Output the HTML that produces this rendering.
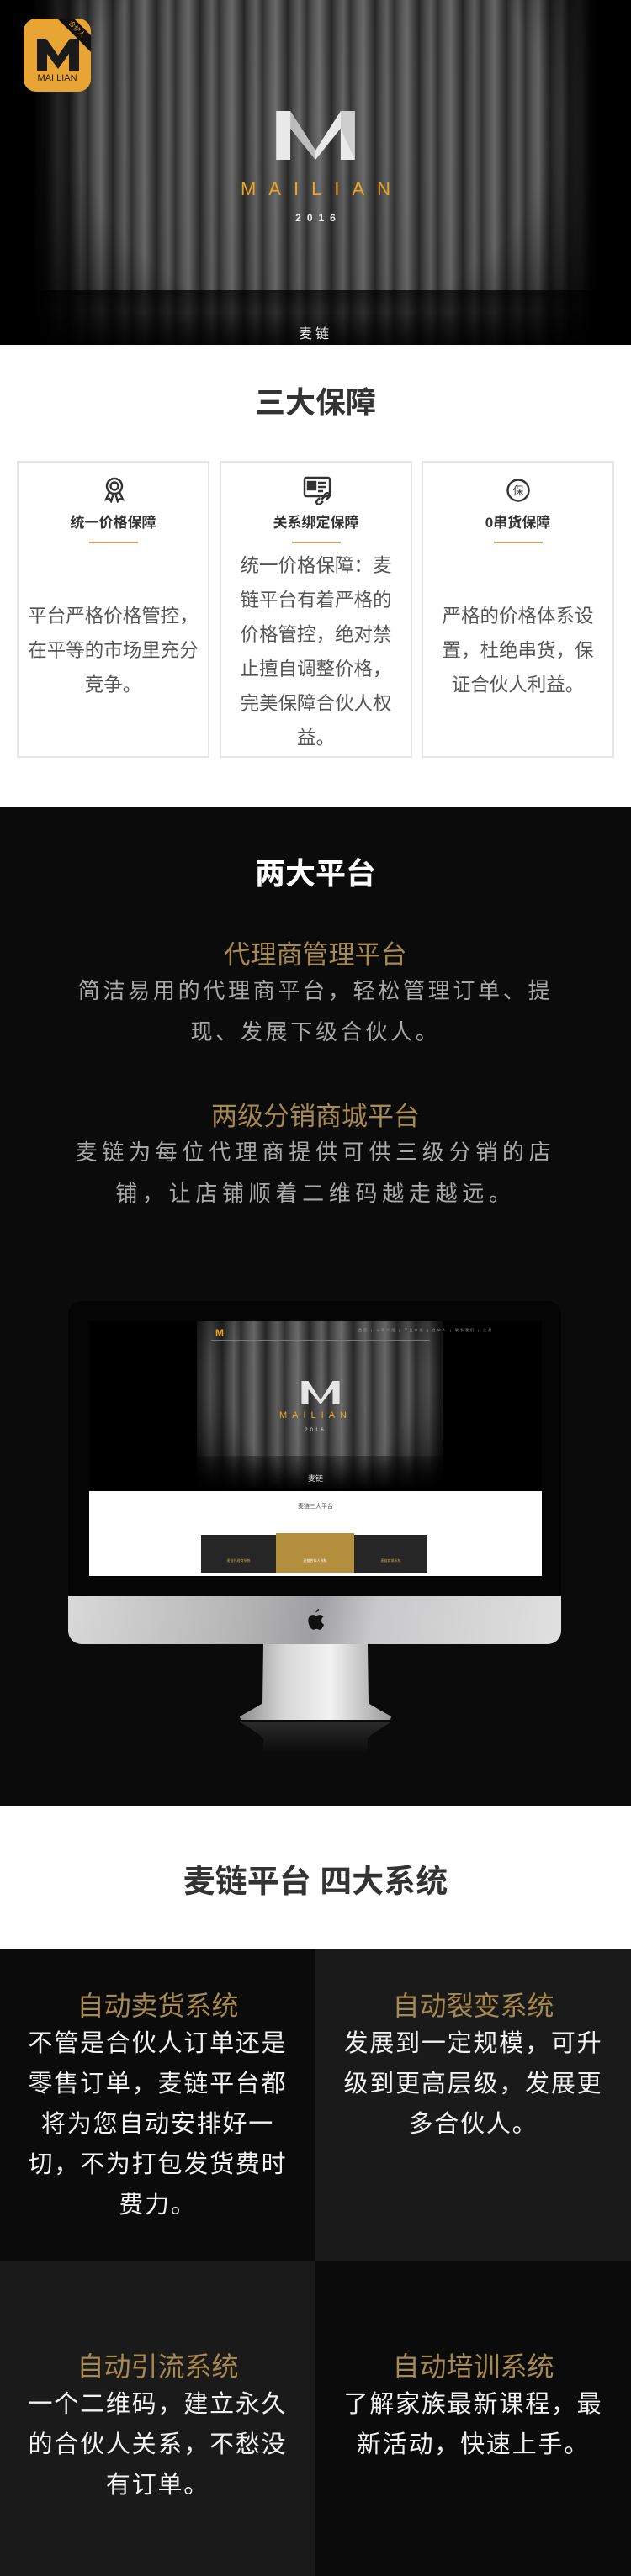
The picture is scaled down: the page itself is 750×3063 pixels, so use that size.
<!DOCTYPE html>
<html><head><meta charset="utf-8">
<style>
*{margin:0;padding:0;box-sizing:border-box}
body{width:750px;height:3063px;position:relative;background:#fff;font-family:"Liberation Sans","Noto Sans CJK SC",sans-serif;overflow:hidden}
.abs{position:absolute}
.c{position:absolute;left:0;width:100%;text-align:center}
.curtain{background:
 radial-gradient(ellipse 62% 95% at 50% 35%,rgba(0,0,0,0) 0%,rgba(0,0,0,.1) 60%,rgba(0,0,0,.9) 100%),
 repeating-linear-gradient(90deg,#333 0px,#5a5a5a 9px,#707070 16px,#454545 24px,#2a2a2a 30px,#505050 38px,#666 44px,#383838 52px);}
.card{position:absolute;top:548px;height:353px;width:229px;border:2px solid #e6e6e6;background:#fff}
.card .t{position:absolute;top:57px;width:100%;text-align:center;font-size:17px;font-weight:bold;color:#333}
.card .ln{position:absolute;top:94px;left:50%;margin-left:-29px;width:58px;height:2px;background:#d6a25a}
.card .b{position:absolute;left:0;width:100%;text-align:center;font-size:22.5px;line-height:41px;color:#555}
.gold{color:#a8894f}
.cell{position:absolute;width:375px;text-align:center}
.cell h3{font-size:32px;font-weight:normal;color:#a8894f;line-height:42px}
.cell p{font-size:29px;line-height:48px;color:#f2f2f2;letter-spacing:1.8px}
</style></head><body>

<!-- HERO -->
<div class="abs curtain" style="left:0;top:0;width:750px;height:410px"></div>
<div class="abs" style="left:0;top:345px;width:750px;height:65px;background:linear-gradient(rgba(0,0,0,.75) 0%,rgba(0,0,0,.55) 40%,rgba(0,0,0,.85) 100%)"></div>
<div class="abs" style="left:0;top:0;width:110px;height:410px;background:linear-gradient(90deg,#000 35%,rgba(0,0,0,0))"></div>
<div class="abs" style="left:640px;top:0;width:110px;height:410px;background:linear-gradient(270deg,#000 35%,rgba(0,0,0,0))"></div>
<!-- small logo -->
<div class="abs" style="left:28px;top:22px;width:80px;height:87px;background:#e8a533;border-radius:15px;overflow:hidden">
 <div class="abs" style="right:-18px;top:6px;width:70px;height:14px;background:#111;transform:rotate(45deg);color:#e8a533;font-size:8px;text-align:center;line-height:14px">合伙人</div>
 <svg class="abs" style="left:16px;top:24px" width="50" height="38" viewBox="0 0 100 76"><polygon points="0,0 22,0 50,40 78,0 100,0 100,76 76,76 76,36 50,72 24,36 24,76 0,76" fill="#1a1a1a"/></svg>
 <div class="abs" style="left:0;top:65px;width:80px;text-align:center;font-size:11px;color:#222">MAI LIAN</div>
</div>
<!-- big M -->
<svg class="abs" style="left:328px;top:132px" width="94" height="58" viewBox="0 0 100 62"><polygon points="0,0 18,0 50,50 82,0 100,0 100,62 82,62 82,22 50,62 18,22 18,62 0,62" fill="#e9e9e9"/><polygon points="18,0 50,50 50,62 18,22" fill="#bdbdbd"/><polygon points="82,0 100,0 100,62 82,22" fill="#cfcfcf"/></svg>
<div class="c" style="top:212px;font-size:22px;color:#f0a420;letter-spacing:15px;padding-left:15px">MAILIAN</div>
<div class="c" style="top:252px;font-size:12px;color:#eee;letter-spacing:7px;padding-left:7px;font-weight:bold">2016</div>
<div class="c" style="top:383px;font-size:16px;color:#eee;letter-spacing:4px">麦链</div>

<!-- 三大保障 -->
<div class="c" style="top:450px;font-size:36px;font-weight:bold;color:#333">三大保障</div>
<div class="card" style="left:20px">
 <svg class="abs" style="left:98px;top:16px" width="32" height="32" viewBox="0 0 32 32" fill="none" stroke="#333" stroke-width="2.4"><circle cx="16" cy="12" r="9"/><circle cx="16" cy="12" r="4.5"/><path d="M10 19 L6 28 L10 27 L12 30 L15 21 M22 19 L26 28 L22 27 L20 30 L17 21"/></svg>
 <div class="t">统一价格保障</div><div class="ln"></div>
 <div class="b" style="top:162px">平台严格价格管控，<br>在平等的市场里充分<br>竞争。</div>
</div>
<div class="card" style="left:261px">
 <svg class="abs" style="left:97px;top:16px" width="34" height="34" viewBox="0 0 34 34" fill="none" stroke="#333" stroke-width="2.4"><rect x="2" y="2" width="30" height="22" rx="2"/><rect x="6" y="7" width="9" height="9" fill="#333"/><path d="M18 8h10M18 13h10M18 18h6"/><path d="M20 26l-3 3a2.5 2.5 0 0 0 4 4l3-3M24 24l3-3a2.5 2.5 0 0 1 4 4l-3 3M21 29l5-5"/></svg>
 <div class="t">关系绑定保障</div><div class="ln"></div>
 <div class="b" style="top:102px">统一价格保障：麦<br>链平台有着严格的<br>价格管控，绝对禁<br>止擅自调整价格，<br>完美保障合伙人权<br>益。</div>
</div>
<div class="card" style="left:501px">
 <svg class="abs" style="left:98px;top:18px" width="30" height="30" viewBox="0 0 30 30"><circle cx="15" cy="15" r="12.5" fill="none" stroke="#333" stroke-width="2.4"/><text x="15" y="20" text-anchor="middle" font-size="13" font-family="Noto Sans CJK SC" fill="#333">保</text></svg>
 <div class="t">0串货保障</div><div class="ln"></div>
 <div class="b" style="top:162px">严格的价格体系设<br>置，杜绝串货，保<br>证合伙人利益。</div>
</div>

<!-- 两大平台 -->
<div class="abs" style="left:0;top:960px;width:750px;height:1187px;background:#0b0b0b"></div>
<div class="c" style="top:1010px;font-size:36px;font-weight:bold;color:#fff">两大平台</div>
<div class="c gold" style="top:1110px;font-size:31px">代理商管理平台</div>
<div class="c" style="top:1154px;font-size:26px;line-height:49px;color:#a9a9a9;letter-spacing:3.7px">简洁易用的代理商平台，轻松管理订单、提<br>现、发展下级合伙人。</div>
<div class="c gold" style="top:1302px;font-size:31px">两级分销商城平台</div>
<div class="c" style="top:1346px;font-size:26px;line-height:49px;color:#a9a9a9;letter-spacing:5.7px">麦链为每位代理商提供可供三级分销的店<br>铺，让店铺顺着二维码越走越远。</div>

<!-- monitor -->
<div class="abs" style="left:81px;top:1547px;width:586px;height:408px;background:#050505;border-radius:16px;overflow:hidden">
 <div class="abs" style="left:0;top:351px;width:586px;height:57px;background:linear-gradient(100deg,#d9d9d9 0%,#b5b5b5 35%,#9f9fa3 50%,#c9c9cb 62%,#e0e0e0 100%)"></div>
</div>
<div class="abs" style="left:106px;top:1571px;width:538px;height:202px;background:#000;overflow:hidden">
 <div class="abs curtain" style="left:128px;top:0;width:292px;height:202px"></div>
 <div class="abs" style="left:128px;top:160px;width:292px;height:42px;background:linear-gradient(rgba(0,0,0,.3),#000)"></div>
 <div class="abs" style="left:145px;top:22px;width:260px;height:1px;background:#777"></div>
 <div class="abs" style="left:150px;top:7px;font-size:12px;font-weight:bold;color:#f0a420">M</div>
 <div class="abs" style="left:320px;top:8px;font-size:4px;color:#aaa;letter-spacing:2px">首页 | 公司介绍 | 平台介绍 | 合伙人 | 联系我们 | 注册</div>
 <svg class="abs" style="left:252px;top:71px" width="46" height="28" viewBox="0 0 100 62"><polygon points="0,0 18,0 50,50 82,0 100,0 100,62 82,62 82,22 50,62 18,22 18,62 0,62" fill="#e5e5e5"/></svg>
 <div class="abs" style="left:0;width:538px;text-align:center;top:106px;font-size:11px;color:#f0a420;letter-spacing:6px">MAILIAN</div>
 <div class="abs" style="left:0;width:538px;text-align:center;top:127px;font-size:6px;color:#ddd;letter-spacing:3px">2016</div>
 <div class="abs" style="left:0;width:538px;text-align:center;top:180px;font-size:9px;color:#ddd">麦链</div>
</div>
<div class="abs" style="left:106px;top:1773px;width:538px;height:101px;background:#fff">
 <div class="abs" style="left:0;width:538px;text-align:center;top:13px;font-size:7px;color:#555">麦链三大平台</div>
 <div class="abs" style="left:133px;top:52px;width:269px;height:45px;background:#262626"></div>
 <div class="abs" style="left:222px;top:50px;width:93px;height:47px;background:#b38e3d"></div>
 <div class="abs" style="left:222px;top:80px;width:93px;text-align:center;font-size:4px;color:#fff">麦链合伙人系统</div>
 <div class="abs" style="left:133px;top:80px;width:89px;text-align:center;font-size:4px;color:#c9a24a">麦链代理商系统</div>
 <div class="abs" style="left:315px;top:80px;width:87px;text-align:center;font-size:4px;color:#c9a24a">麦链商城系统</div>
</div>
<!-- apple -->
<svg class="abs" style="left:364px;top:1913px" width="22" height="26" viewBox="0 0 22 26"><path d="M15 0c0 2-1.5 4-3.5 4.2C11.3 2.2 13 .3 15 0zM18 13.8c0-3 2.4-4.3 2.5-4.4-1.4-2-3.5-2.3-4.2-2.3-1.8-.2-3.5 1-4.4 1-.9 0-2.3-1-3.8-1-2 0-3.8 1.2-4.8 2.9-2.1 3.6-.5 8.9 1.5 11.8 1 1.4 2.1 3 3.6 3 1.5-.1 2-.9 3.8-.9 1.7 0 2.200.9 3.7.9 1.6 0 2.600-1.4 3.5-2.9 1.1-1.6 1.6-3.2 1.6-3.3 0 0-3-1.2-3-4.8z" fill="#111"/></svg>
<!-- stand -->
<svg class="abs" style="left:280px;top:1955px" width="190" height="130" viewBox="0 0 190 130"><defs><linearGradient id="s" x1="0" x2="1"><stop offset="0" stop-color="#8d8d8d"/><stop offset=".3" stop-color="#d8d8d8"/><stop offset=".6" stop-color="#f2f2f2"/><stop offset="1" stop-color="#9a9a9a"/></linearGradient><linearGradient id="r" x1="0" y1="0" x2="0" y2="1"><stop offset="0" stop-color="#2a2a2a"/><stop offset="1" stop-color="#0b0b0b"/></linearGradient></defs><path d="M33 0 H157 L158 70 Q160 72 185 86 L184 90 H6 L5 86 Q30 72 32 70 Z" fill="url(#s)"/><path d="M6 93 H184 Q160 108 157 112 V130 H33 V112 Q30 108 6 93Z" fill="url(#r)"/></svg>

<!-- 四大系统 -->
<div class="c" style="top:2206px;font-size:38px;font-weight:bold;color:#333">麦链平台 四大系统</div>
<div class="abs" style="left:0;top:2318px;width:375px;height:370px;background:#0b0b0b"></div>
<div class="abs" style="left:375px;top:2318px;width:375px;height:370px;background:#1a1a1a"></div>
<div class="abs" style="left:0;top:2688px;width:375px;height:375px;background:#1a1a1a"></div>
<div class="abs" style="left:375px;top:2688px;width:375px;height:375px;background:#0b0b0b"></div>
<div class="cell" style="left:0;top:2364px"><h3>自动卖货系统</h3><p>不管是合伙人订单还是<br>零售订单，麦链平台都<br>将为您自动安排好一<br>切，不为打包发货费时<br>费力。</p></div>
<div class="cell" style="left:375px;top:2364px"><h3>自动裂变系统</h3><p>发展到一定规模，可升<br>级到更高层级，发展更<br>多合伙人。</p></div>
<div class="cell" style="left:0;top:2793px"><h3>自动引流系统</h3><p>一个二维码，建立永久<br>的合伙人关系，不愁没<br>有订单。</p></div>
<div class="cell" style="left:375px;top:2793px"><h3>自动培训系统</h3><p>了解家族最新课程，最<br>新活动，快速上手。</p></div>
</body></html>
